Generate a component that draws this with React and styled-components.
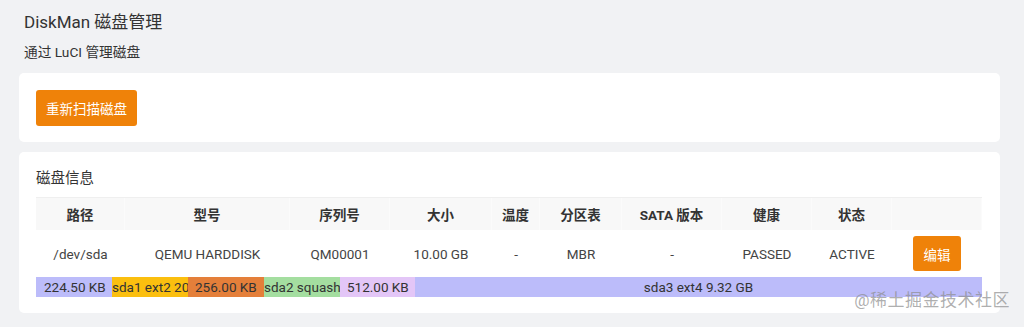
import React from "react";
import styled, { createGlobalStyle } from "styled-components";

const Global = createGlobalStyle`
  html, body { margin: 0; padding: 0; background: #f1f2f4; }
  body { font-family: Roboto, "Noto Sans CJK SC", sans-serif; color: #333; }
`;

const Page = styled.div`
  position: relative;
  width: 1024px;
  height: 327px;
  box-sizing: border-box;
  padding: 11px 24px 0 19px;
  display: flex;
  flex-direction: column;
  overflow: hidden;
`;

const Title = styled.h2`
  margin: 0;
  padding-left: 5px;
  font-size: 17px;
  font-weight: 400;
  line-height: 22px;
  color: #333;
`;

const Subtitle = styled.p`
  margin: 9px 0 0;
  padding-left: 5px;
  font-size: 13.7px;
  line-height: 20px;
  color: #333;
`;

const Card = styled.section`
  background: #fff;
  border-radius: 5px;
  box-sizing: border-box;
  padding: ${(p) => p.$pad};
  margin-top: ${(p) => p.$mt}px;
`;

const Button = styled.button`
  border: none;
  border-radius: 3px;
  background: #ef8209;
  color: #fff;
  font-family: inherit;
  font-size: 13.5px;
  padding: 0;
  width: ${(p) => p.$w}px;
  height: ${(p) => p.$h}px;
  cursor: pointer;
`;

const SectionTitle = styled.h3`
  margin: 0 0 8px;
  font-size: 14.5px;
  font-weight: 400;
  line-height: 20px;
  color: #333;
`;

const cols = "89px 165px 100px 102px 48px 82px 100px 90px 80px 90px";

const HeadRow = styled.div`
  display: grid;
  grid-template-columns: ${cols};
  height: 33px;
  background: #f8f8f8;
  border-top: 1px solid #efefef;
  box-sizing: border-box;
`;

const HeadCell = styled.div`
  display: flex;
  align-items: center;
  justify-content: center;
  font-size: 13.5px;
  font-weight: 700;
  color: #333;
  border-right: 1px solid #fbfbfb;
`;

const Row = styled.div`
  display: grid;
  grid-template-columns: ${cols};
  height: 47px;
`;

const Cell = styled.div`
  display: flex;
  align-items: center;
  justify-content: center;
  font-size: 13.5px;
  color: #444;
`;

const Bar = styled.div`
  display: flex;
  height: 20px;
`;

const Seg = styled.div`
  flex: ${(p) => (p.$grow ? "1 1 auto" : `0 0 ${p.$w}px`)};
  background: ${(p) => p.$bg};
  font-size: 13.5px;
  line-height: 20px;
  color: #333;
  white-space: nowrap;
  overflow: hidden;
  box-sizing: border-box;
  padding-left: ${(p) => (p.$grow ? 0 : p.$pl)}px;
  text-align: ${(p) => (p.$grow ? "center" : "left")};
`;

const Watermark = styled.div`
  position: absolute;
  right: 14px;
  bottom: 16px;
  font-size: 17px;
  color: rgba(140, 140, 140, 0.7);
  letter-spacing: 0.5px;
`;

const headers = ["路径", "型号", "序列号", "大小", "温度", "分区表", "SATA 版本", "健康", "状态", ""];
const values = ["/dev/sda", "QEMU HARDDISK", "QM00001", "10.00 GB", "-", "MBR", "-", "PASSED", "ACTIVE"];
const segs = [
  { t: "224.50 KB", bg: "#bcbcfa", w: 76, pl: 8 },
  { t: "sda1 ext2 20", bg: "#fbbf0f", w: 76, pl: 0 },
  { t: "256.00 KB", bg: "#e47f3a", w: 76, pl: 7 },
  { t: "sda2 squash", bg: "#a4dea0", w: 76, pl: 0 },
  { t: "512.00 KB", bg: "#e3c6f7", w: 75, pl: 7 },
];

export default function App() {
  return (
    <Page>
      <Global />
      <Title>DiskMan 磁盘管理</Title>
      <Subtitle>通过 LuCI 管理磁盘</Subtitle>
      <Card $pad="17px 17px 16px" $mt={11}>
        <Button $w={101} $h={36}>重新扫描磁盘</Button>
      </Card>
      <Card $pad="17px 18px 16px 17px" $mt={10}>
        <SectionTitle>磁盘信息</SectionTitle>
        <HeadRow>
          {headers.map((h, i) => (
            <HeadCell key={i}>{h}</HeadCell>
          ))}
        </HeadRow>
        <Row>
          {values.map((v, i) => (
            <Cell key={i}>{v}</Cell>
          ))}
          <Cell>
            <Button $w={48} $h={35}>编辑</Button>
          </Cell>
        </Row>
        <Bar>
          {segs.map((s, i) => (
            <Seg key={i} $bg={s.bg} $w={s.w} $pl={s.pl}>{s.t}</Seg>
          ))}
          <Seg $grow $bg="#bcbcfa">sda3 ext4 9.32 GB</Seg>
        </Bar>
      </Card>
      <Watermark>@稀土掘金技术社区</Watermark>
    </Page>
  );
}
